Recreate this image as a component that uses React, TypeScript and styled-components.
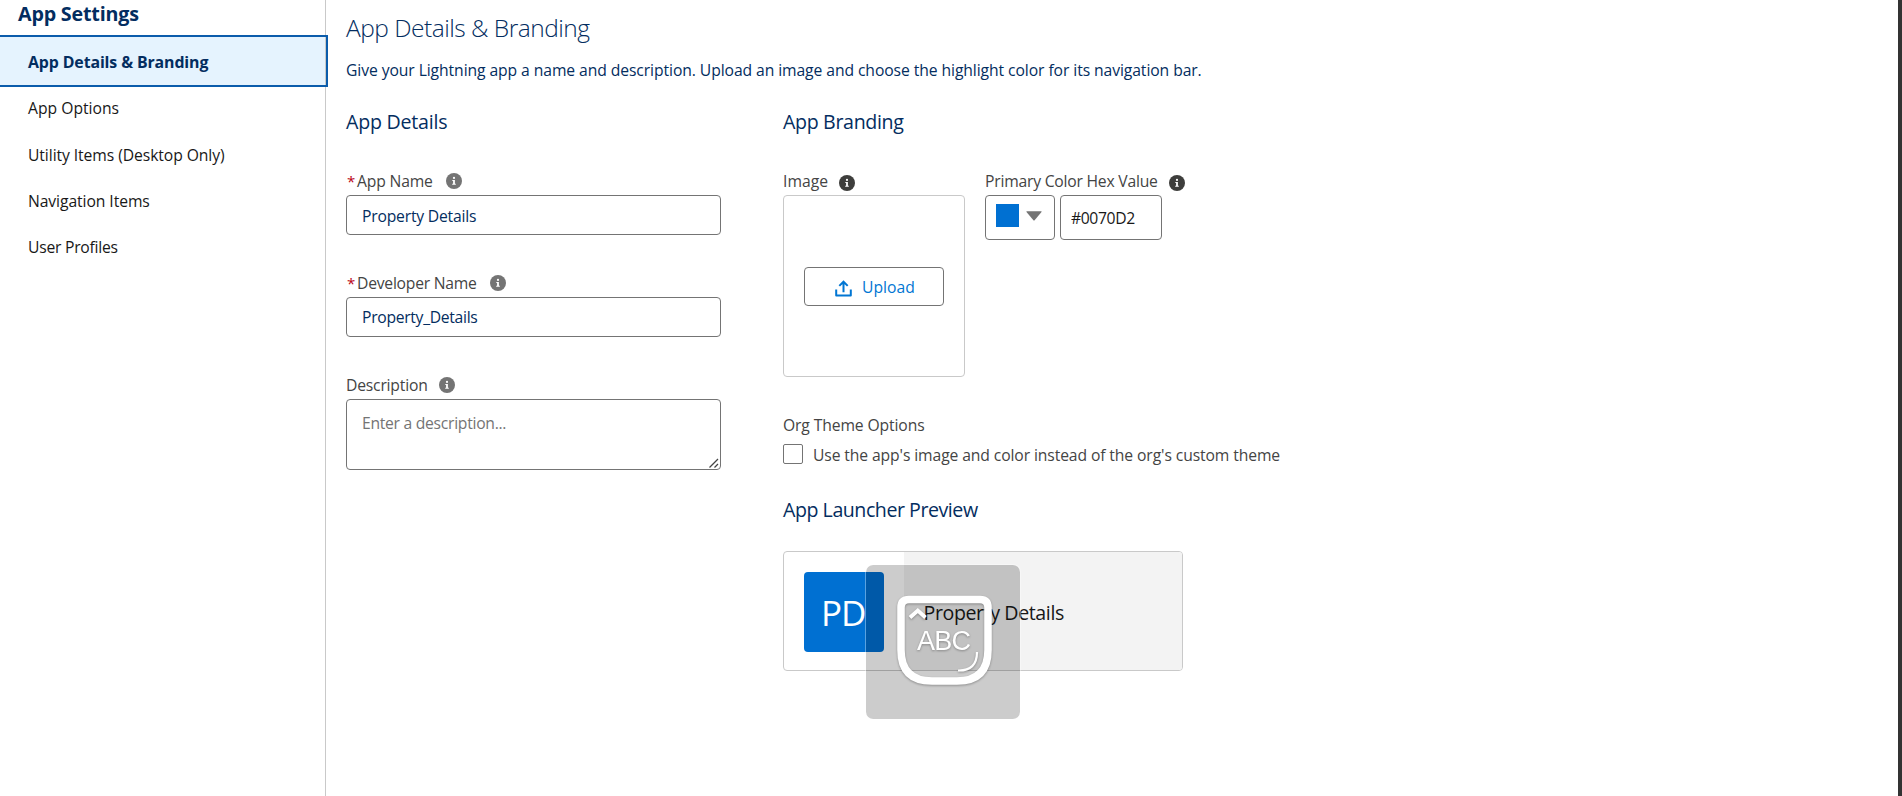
import React from "react";
import styled, { createGlobalStyle } from "styled-components";

const GlobalStyle = createGlobalStyle`
  *, *::before, *::after { box-sizing: border-box; }
  body {
    margin: 0;
    background: #fff;
    color: #444;
    font: 15.7px/24px "Open Sans", "Noto Sans", sans-serif;
    overflow: hidden;
  }
  h1, h2, p { margin: 0; }
`;

const Page = styled.div`
  position: relative;
  display: flex;
  height: 796px;
  border-right: 4px solid #333;
`;

const Sidebar = styled.nav`
  width: 326px;
  flex: none;
  border-right: 1px solid #c9c9c9;
`;

const SidebarTitle = styled.h2`
  height: 37px;
  padding-left: 18px;
  font-size: 19.7px;
  line-height: 28px;
  letter-spacing: -0.19px;
  color: #032d60;
`;

const NavItem = styled.a<{ $active?: boolean; $tracking: number }>`
  display: flex;
  align-items: center;
  height: ${(p) => (p.$active ? 48 : 46.4)}px;
  padding: ${(p) => (p.$active ? "2px 0 0 28px" : "0 0 0 28px")};
  margin-right: ${(p) => (p.$active ? -1 : 0)}px;
  position: relative;
  color: ${(p) => (p.$active ? "#032d60" : "#181818")};
  background: ${(p) => (p.$active ? "linear-gradient(90deg, #e5f3fe calc(100% - 1px), #c9c9c9 0)" : "none")};
  box-shadow: ${(p) => (p.$active ? "0 0 0 2px #0b5cab" : "none")};
  font-size: ${(p) => (p.$active ? 15.9 : 15.7)}px;
  font-weight: ${(p) => (p.$active ? 700 : 400)};
  letter-spacing: ${(p) => p.$tracking}px;
`;

const Main = styled.main`
  flex: 1;
  padding: 12px 20px 0;
  color: #032d60;
`;

const Title = styled.h1`
  font-size: 24.5px;
  font-weight: 300;
  line-height: 32px;
  letter-spacing: -0.5px;
`;

const Intro = styled.p`
  margin-top: 14px;
  letter-spacing: -0.085px;
`;

const Columns = styled.div`
  display: flex;
  gap: 62px;
  margin-top: 25px;
`;

const DetailsColumn = styled.section`
  width: 375px;
`;

const BrandingColumn = styled.section`
  width: 520px;
`;

const Heading = styled.h2<{ $tracking: number }>`
  height: 28px;
  padding-top: 1px;
  font-size: 19.6px;
  font-weight: 400;
  line-height: 28px;
  letter-spacing: ${(p) => p.$tracking}px;
`;

const Field = styled.div<{ $top?: number }>`
  margin-top: ${(p) => p.$top ?? 36}px;
`;

const Label = styled.label<{ $tracking: number; $gap?: number }>`
  display: flex;
  align-items: center;
  height: 24px;
  margin-bottom: 2px;
  color: #444;
  letter-spacing: ${(p) => p.$tracking}px;
  white-space: nowrap;

  svg {
    flex: none;
    margin-left: ${(p) => p.$gap ?? 13}px;
    margin-bottom: 1px;
  }
`;

const Required = styled.abbr`
  width: 11px;
  padding-left: 1px;
  color: #ba0517;
  font-size: 15px;
`;

const TextInput = styled.input<{ $tracking: number; $shift?: number }>`
  display: block;
  width: 375px;
  height: 40px;
  padding: ${(p) => p.$shift ?? 1}px 15px 0;
  border: 1px solid #747474;
  border-radius: 4px;
  outline: none;
  color: #032d60;
  background: #fff;
  font: inherit;
  letter-spacing: ${(p) => p.$tracking}px;
`;

const TextAreaFrame = styled.div`
  position: relative;
  height: 71px;

  svg {
    position: absolute;
    right: 2px;
    bottom: 2px;
  }
`;

const TextArea = styled.textarea`
  display: block;
  width: 375px;
  height: 71px;
  padding: 11px 15px;
  border: 1px solid #747474;
  border-radius: 4px;
  outline: none;
  resize: none;
  font: inherit;
  letter-spacing: -0.28px;

  &::placeholder { color: #747474; }
`;

const BrandingRow = styled.div`
  display: flex;
  gap: 20px;
  margin-top: 34px;
`;

const ImageDrop = styled.div`
  display: flex;
  align-items: center;
  justify-content: center;
  width: 182px;
  height: 182px;
  border: 1px solid #c9c9c9;
  border-radius: 4px;
`;

const UploadButton = styled.button`
  display: flex;
  align-items: center;
  width: 140px;
  height: 39px;
  padding: 1px 0 0 30px;
  border: 1px solid #747474;
  border-radius: 4px;
  background: #fff;
  color: #0176d3;
  font: inherit;

  svg { margin: 4px 10px 0 0; }
`;

const ColorRow = styled.div`
  display: flex;
  gap: 5px;
`;

const SwatchButton = styled.button`
  display: flex;
  align-items: flex-start;
  width: 70px;
  height: 45px;
  padding: 8px 10px;
  border: 1px solid #747474;
  border-radius: 4px;
  background: #fff;

  svg { margin: 7px 0 0 7px; }
`;

const Swatch = styled.span`
  width: 23px;
  height: 23px;
  background: #0070d2;
`;

const HexInput = styled.input`
  width: 102px;
  height: 45px;
  padding: 1px 10px 0;
  border: 1px solid #747474;
  border-radius: 4px;
  outline: none;
  color: #181818;
  font: inherit;
  letter-spacing: -0.37px;
`;

const ThemeOptions = styled.div`
  margin-top: 36px;
  color: #444;
  letter-spacing: -0.12px;
`;

const CheckRow = styled.label`
  display: flex;
  gap: 10px;
  margin: 6px 0 28px;
  letter-spacing: -0.11px;
  white-space: nowrap;
`;

const CheckBox = styled.span`
  width: 20px;
  height: 20px;
  margin-top: 1px;
  border: 1px solid #747474;
  border-radius: 2px;
`;

const PreviewCard = styled.div`
  display: flex;
  width: 400px;
  height: 120px;
  margin-top: 28px;
  border: 1px solid #c9c9c9;
  border-radius: 4px;
  overflow: hidden;
`;

const TileCell = styled.div`
  width: 120px;
  padding: 20px;
`;

const Tile = styled.div`
  width: 80px;
  height: 80px;
  padding-left: 17px;
  border-radius: 4px;
  background: #0070d2;
  color: #fff;
  font-size: 35px;
  line-height: 81px;
  letter-spacing: -1px;
`;

const PreviewName = styled.div`
  flex: 1;
  padding: 1px 0 0 19.5px;
  background: #f3f3f3;
  color: #181818;
  font-size: 19.6px;
  line-height: 120px;
  letter-spacing: -0.4px;
`;

const CapsIndicator = styled.div`
  position: absolute;
  left: 865px;
  top: 564px;
  width: 156px;
  height: 156px;
  border: 1px solid rgba(255, 255, 255, 0.35);
  border-radius: 8px;
  background: rgba(0, 0, 0, 0.2);
  background-clip: padding-box;

  svg {
    display: block;
    filter: drop-shadow(0 1px 1px rgba(0, 0, 0, 0.3));
  }
`;

const InfoIcon = ({ color = "#747474" }: { color?: string }) => (
  <svg width="16" height="16" viewBox="0 0 16 16">
    <circle cx="8" cy="8" r="8" fill={color} />
    <circle cx="8" cy="4.9" r="1.1" fill="#fff" />
    <path d="M6.3 7h2.6v3.7h.9v1H6.2v-1h.9V8h-.8z" fill="#fff" />
  </svg>
);

const DarkInfo = styled.span`
  display: flex;
  padding-top: 5px;
`;

const navItems = [
  { label: "App Details & Branding", tracking: -0.12, active: true },
  { label: "App Options", tracking: 0 },
  { label: "Utility Items (Desktop Only)", tracking: -0.08 },
  { label: "Navigation Items", tracking: -0.08 },
  { label: "User Profiles", tracking: -0.25 },
];

export default function App() {
  return (
    <Page>
      <GlobalStyle />
      <Sidebar>
        <SidebarTitle>App Settings</SidebarTitle>
        {navItems.map((item) => (
          <NavItem key={item.label} $active={item.active} $tracking={item.tracking}>
            {item.label}
          </NavItem>
        ))}
      </Sidebar>
      <Main>
        <Title>App Details &amp; Branding</Title>
        <Intro>
          Give your Lightning app a name and description. Upload an image and choose the highlight color for its
          navigation bar.
        </Intro>
        <Columns>
          <DetailsColumn>
            <Heading $tracking={-0.23}>App Details</Heading>
            <Field $top={34}>
              <Label $tracking={-0.16}>
                <Required>*</Required>App Name
                <InfoIcon />
              </Label>
              <TextInput $tracking={-0.2} defaultValue="Property Details" />
            </Field>
            <Field>
              <Label $tracking={-0.24}>
                <Required>*</Required>Developer Name
                <InfoIcon />
              </Label>
              <TextInput $tracking={-0.3} $shift={0} defaultValue="Property_Details" />
            </Field>
            <Field>
              <Label $tracking={-0.2} $gap={11}>
                Description
                <InfoIcon />
              </Label>
              <TextAreaFrame>
                <TextArea placeholder="Enter a description..." />
                <svg width="10" height="10" viewBox="0 0 10 10" stroke="#444" strokeWidth="1.300">
                  <path d="M.5 9.500L9 1M5.500 9.500L9 6" />
                </svg>
              </TextAreaFrame>
            </Field>
          </DetailsColumn>
          <BrandingColumn>
            <Heading $tracking={-0.34}>App Branding</Heading>
            <BrandingRow>
              <div>
                <Label $tracking={0.05} $gap={11}>
                  Image
                  <DarkInfo><InfoIcon color="#3e3e3c" /></DarkInfo>
                </Label>
                <ImageDrop>
                  <UploadButton>
                    <svg width="17" height="17" viewBox="0 0 17 17" fill="none" stroke="#0176d3" strokeWidth="2">
                      <path d="M1.2 9.5v5.9h14.6V9.5" strokeLinejoin="round" />
                      <path d="M8.5 12.3V2.5M4.3 5.9l4.2-4.2 4.2 4.2" />
                    </svg>
                    Upload
                  </UploadButton>
                </ImageDrop>
              </div>
              <div>
                <Label $tracking={-0.22} $gap={11}>
                  Primary Color Hex Value
                  <DarkInfo><InfoIcon color="#3e3e3c" /></DarkInfo>
                </Label>
                <ColorRow>
                  <SwatchButton>
                    <Swatch />
                    <svg width="16" height="10" viewBox="0 0 16 10">
                      <path d="M.8.3h14.4q.7 0 .3.7L8.6 9.3q-.6.6-1.2 0L.5 1Q.1.3.8.3z" fill="#747474" />
                    </svg>
                  </SwatchButton>
                  <HexInput defaultValue="#0070D2" />
                </ColorRow>
              </div>
            </BrandingRow>
            <ThemeOptions>
              Org Theme Options
              <CheckRow>
                <CheckBox />
                Use the app's image and color instead of the org's custom theme
              </CheckRow>
            </ThemeOptions>
            <Heading $tracking={-0.46}>App Launcher Preview</Heading>
            <PreviewCard>
              <TileCell>
                <Tile>PD</Tile>
              </TileCell>
              <PreviewName>Property Details</PreviewName>
            </PreviewCard>
          </BrandingColumn>
        </Columns>
      </Main>
      <CapsIndicator>
        <svg width="154" height="154" viewBox="866 565 154 154" fill="none" stroke="#fff">
          <path
            d="M909 599.5H980Q988 599.5 988 607.500V650Q988 681 957 681H932Q901 681 901 650V607.500Q901 599.500 909 599.5Z"
            strokeWidth="7.500"
          />
          <path d="M910 617.500L917.800 610.500L925.500 617.500" strokeWidth="3.800" />
          <path d="M977 652Q977 671 958 670.500" strokeWidth="2.200" />
          <text x="917" y="650" fill="#fff" stroke="none" fontFamily="Liberation Sans, Arial, sans-serif" fontSize="27" textLength="54">
            ABC
          </text>
        </svg>
      </CapsIndicator>
    </Page>
  );
}
